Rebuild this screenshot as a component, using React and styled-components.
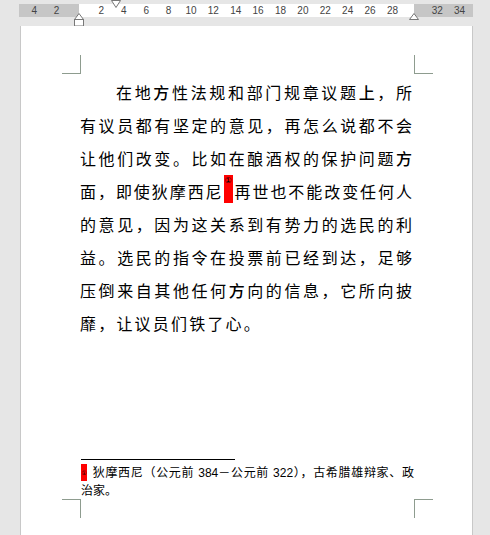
import React from "react";
import styled, { createGlobalStyle } from "styled-components";

const GlobalStyle = createGlobalStyle`
  html, body {
    margin: 0;
    padding: 0;
    background: #e6e6e6;
  }
`;

const UNIT = 22.4;

const Screen = styled.div`
  width: 490px;
  height: 535px;
  overflow: hidden;
  background: #e6e6e6;
  padding-top: 4px;
  box-sizing: border-box;
`;

const RulerBar = styled.div`
  position: relative;
  display: flex;
  margin-left: 19px;
  width: 454px;
  height: 13px;
`;

const RulerPart = styled.div`
  display: flex;
  justify-content: ${(p) => (p.$align === "end" ? "flex-end" : "flex-start")};
  width: ${(p) => p.$width}px;
  box-sizing: border-box;
  padding: ${(p) => p.$pad || "0"};
  background: ${(p) => (p.$margin ? "#c6c6c6" : "#ffffff")};
`;

const Tick = styled.span`
  flex: none;
  width: ${UNIT}px;
  text-align: center;
  font-family: "Liberation Sans", Arial, sans-serif;
  font-size: 10px;
  line-height: 13px;
  color: #444;
`;

const Marker = styled.svg`
  position: absolute;
  top: ${(p) => p.$top}px;
  left: ${(p) => p.$left}px;
  overflow: visible;
`;

const Page = styled.div`
  position: relative;
  display: flex;
  flex-direction: column;
  margin: 9px 0 0 20px;
  width: 453px;
  height: 509px;
  box-sizing: border-box;
  padding: 50px 58px 35px 59px;
  background: #fff;
  border-left: 1px solid #c8c8c8;
  border-right: 1px solid #c8c8c8;
`;

const Corner = styled.div`
  position: absolute;
  width: 18px;
  height: 18px;
  top: ${(p) => (p.$bottom ? 473 : 29)}px;
  left: ${(p) => (p.$right ? 393 : 41)}px;
  border-color: #8e9c8f;
  border-style: solid;
  border-width: 0;
  ${(p) => (p.$right ? "border-left-width: 1px;" : "border-right-width: 1px;")}
  ${(p) => (p.$bottom ? "border-top-width: 1px;" : "border-bottom-width: 1px;")}
`;

const Body = styled.div`
  display: flex;
  flex-direction: column;
  font-family: "Noto Sans CJK SC", "Noto Sans", sans-serif;
  font-size: 16px;
  line-height: 33px;
  color: #000;
`;

const Line = styled.div`
  white-space: nowrap;
  text-align: justify;
  text-align-last: ${(p) => (p.$last ? "left" : "justify")};
  letter-spacing: ${(p) => (p.$last ? "2.2px" : "0")};
  padding-left: ${(p) => (p.$indent ? "36px" : "0")};
  padding-right: ${(p) => (p.$last ? "0" : "2px")};
`;

const Heavy = styled.span`
  font-weight: 500;
`;

const RefMark = styled.span`
  display: inline-flex;
  justify-content: center;
  align-items: flex-start;
  vertical-align: top;
  width: 9px;
  height: 28px;
  background: #ff0000;
  font-family: "DejaVu Sans", sans-serif;
  font-size: 8px;
  line-height: 11px;
  letter-spacing: 0;
  color: #000;
`;

const Notes = styled.div`
  margin-top: auto;
  font-family: "Liberation Sans", "Noto Sans CJK SC", sans-serif;
  font-size: 12px;
  line-height: 18px;
  color: #000;
`;

const Rule = styled.div`
  width: 154px;
  height: 1px;
  margin: 0 0 4px 1px;
  background: #000;
`;

const NoteLine = styled.div`
  white-space: nowrap;
  text-align: justify;
  text-align-last: ${(p) => (p.$last ? "left" : "justify")};
  padding-left: 1px;
`;

const NoteMark = styled.span`
  display: inline-flex;
  justify-content: center;
  align-items: center;
  vertical-align: middle;
  width: 6px;
  height: 17px;
  margin: -2px 5px 0 0;
  background: #ff0000;
  font-family: "DejaVu Sans", sans-serif;
  font-size: 6px;
  line-height: 8px;
  color: #000;
`;

const leftTicks = ["4", "2"];
const midTicks = ["2", "4", "6", "8", "10", "12", "14", "16", "18", "20", "22", "24", "26", "28"];
const rightTicks = ["32", "34"];

function Ruler() {
  return (
    <RulerBar>
      <RulerPart $margin $width={60} $align="end" $pad={`0 ${UNIT / 2}px 0 0`}>
        {leftTicks.map((t, i) => (
          <Tick key={i}>{t}</Tick>
        ))}
      </RulerPart>
      <RulerPart $width={335} $pad={`0 0 0 ${UNIT / 2}px`}>
        {midTicks.map((t) => (
          <Tick key={t}>{t}</Tick>
        ))}
      </RulerPart>
      <RulerPart $margin $width={59} $pad="0 0 0 12px">
        {rightTicks.map((t) => (
          <Tick key={t}>{t}</Tick>
        ))}
      </RulerPart>

      <Marker $top={-4} $left={92} width="10" height="8">
        <path d="M0.5 0.5 H9.5 L5 7.5 Z" fill="#fff" stroke="#777" strokeWidth="1" />
      </Marker>
      <Marker $top={9} $left={55} width="10" height="14">
        <path d="M5 0.5 L9.5 6.5 H0.5 Z" fill="#fff" stroke="#777" strokeWidth="1" />
        <rect x="0.5" y="6.5" width="9" height="6.5" fill="#fff" stroke="#777" strokeWidth="1" />
      </Marker>
      <Marker $top={9} $left={390} width="10" height="7">
        <path d="M5 0.5 L9.5 6.5 H0.5 Z" fill="#fff" stroke="#777" strokeWidth="1" />
      </Marker>
    </RulerBar>
  );
}

export default function App() {
  return (
    <Screen>
      <GlobalStyle />
      <Ruler />
      <Page>
        <Corner />
        <Corner $right />
        <Corner $bottom />
        <Corner $bottom $right />

        <Body>
          <Line $indent>
            在地<Heavy>方</Heavy>性法规和部门规章议题<Heavy>上</Heavy>，所
          </Line>
          <Line>有议员都有坚定的意见，再怎么说都不会</Line>
          <Line>
            让他们改变。比如在酿酒权的保护问题<Heavy>方</Heavy>
          </Line>
          <Line>
            面，即使狄摩西尼<RefMark>①</RefMark>再世也不能改变任何人
          </Line>
          <Line>的意见，因为这关系到有势力的选民的利</Line>
          <Line>益。选民的指令在投票前已经到达，足够</Line>
          <Line>
            压倒来自其他任何<Heavy>方</Heavy>向的信息，它所向披
          </Line>
          <Line $last>靡，让议员们铁了心。</Line>
        </Body>

        <Notes>
          <Rule />
          <NoteLine>
            <NoteMark>①</NoteMark>狄摩西尼（公元前 384－公元前 322），古希腊雄辩家、政
          </NoteLine>
          <NoteLine $last>治家。</NoteLine>
        </Notes>
      </Page>
    </Screen>
  );
}
